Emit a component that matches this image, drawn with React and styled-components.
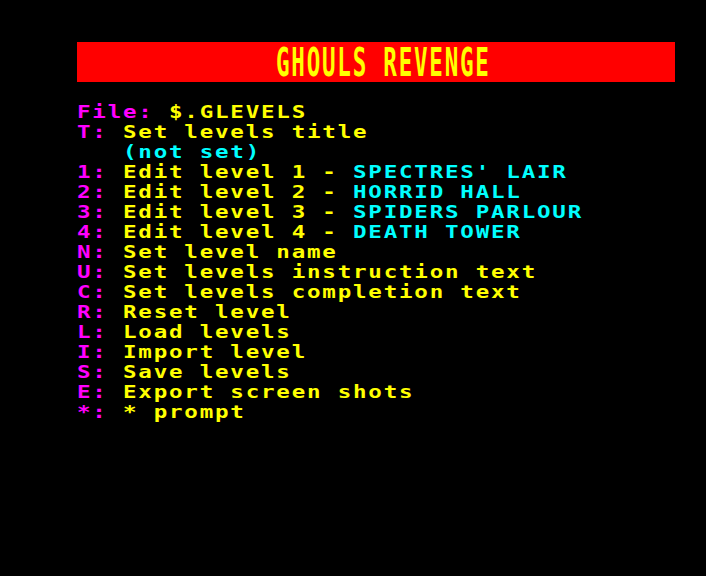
import styled, { createGlobalStyle } from "styled-components";

// teletext cell: 15.33px wide, 20px high; glyphs are stretched 1.25x sideways
const CELL = 15.333;
const STRETCH = 1.25;
const INNER = CELL / STRETCH;

const colores = {
  magenta: "#ff00ff",
  amarillo: "#ffff00",
  cian: "#00ffff",
  rojo: "#ff0000",
};

const opciones = [
  { tecla: "File:", texto: "$.GLEVELS" },
  { tecla: "T:", texto: "Set levels title" },
  { extra: "(not set)", sangria: 3 },
  { tecla: "1:", texto: "Edit level 1 - ", extra: "SPECTRES' LAIR" },
  { tecla: "2:", texto: "Edit level 2 - ", extra: "HORRID HALL" },
  { tecla: "3:", texto: "Edit level 3 - ", extra: "SPIDERS PARLOUR" },
  { tecla: "4:", texto: "Edit level 4 - ", extra: "DEATH TOWER" },
  { tecla: "N:", texto: "Set level name" },
  { tecla: "U:", texto: "Set levels instruction text" },
  { tecla: "C:", texto: "Set levels completion text" },
  { tecla: "R:", texto: "Reset level" },
  { tecla: "L:", texto: "Load levels" },
  { tecla: "I:", texto: "Import level" },
  { tecla: "S:", texto: "Save levels" },
  { tecla: "E:", texto: "Export screen shots" },
  { tecla: "*:", texto: "* prompt" },
];

export default function App() {
  return (
    <>
      <GlobalStyle />
      <Pantalla>
        <BarraTitulo>
          <Titulo>GHOULS REVENGE</Titulo>
        </BarraTitulo>
        <Menu>
          {opciones.map((o, i) => (
            <Linea key={i} $sangria={o.sangria || 0}>
              {o.tecla && <Color $c={colores.magenta}>{o.tecla + " "}</Color>}
              {o.texto && <Color $c={colores.amarillo}>{o.texto}</Color>}
              {o.extra && <Color $c={colores.cian}>{o.extra}</Color>}
            </Linea>
          ))}
        </Menu>
      </Pantalla>
    </>
  );
}

const GlobalStyle = createGlobalStyle`
  html, body {
    margin: 0;
    padding: 0;
    background: #000;
  }
`;

const Pantalla = styled.div`
  width: 706px;
  height: 576px;
  background: #000;
  padding: 42px 0 0 77px;
  box-sizing: border-box;
  font-family: "DejaVu Sans Mono", "Liberation Mono", monospace;
  font-weight: 700;
  font-size: 18px;
  overflow: hidden;
`;

const BarraTitulo = styled.div`
  width: 598px;
  height: 40px;
  background: ${colores.rojo};
  padding-left: ${13 * CELL}px;
  box-sizing: border-box;
`;

const Titulo = styled.span`
  display: inline-block;
  color: ${colores.amarillo};
  line-height: 18px;
  height: 18px;
  letter-spacing: ${INNER - 10.837}px;
  white-space: pre;
  transform-origin: left top;
  transform: scale(${STRETCH}, 2.16);
`;

const Menu = styled.div`
  margin-top: 20px;
  transform-origin: left top;
  transform: scaleX(${STRETCH});
`;

const Linea = styled.div`
  height: 20px;
  line-height: 20px;
  white-space: pre;
  letter-spacing: ${INNER - 10.837}px;
  padding-left: ${({ $sangria }) => $sangria * INNER}px;
`;

const Color = styled.span`
  color: ${({ $c }) => $c};
`;
